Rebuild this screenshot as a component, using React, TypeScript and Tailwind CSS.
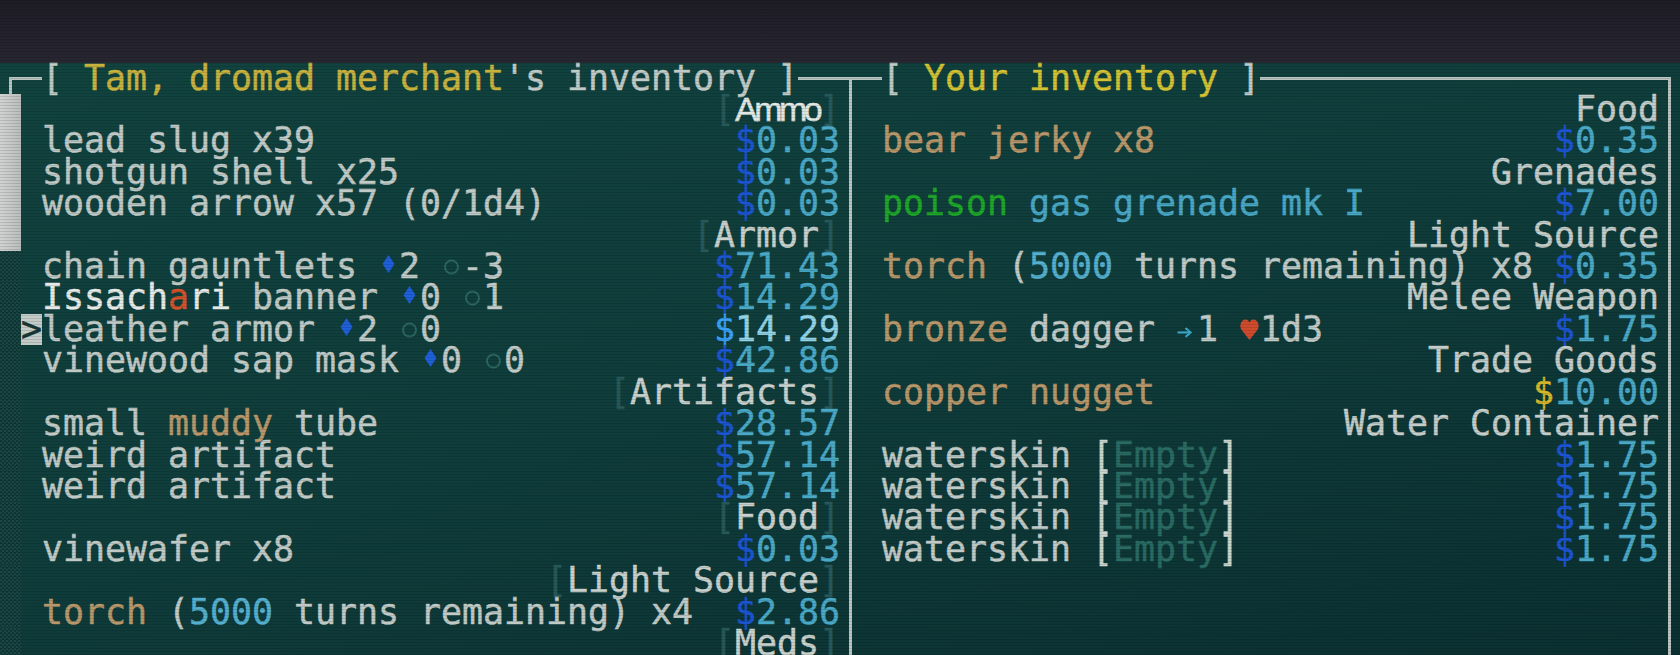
import React from "react";

const LINE = "bg-[#bac5c1]";

function Diamond() {
  return (
    <svg width="21" height="31" viewBox="0 0 21 31" className="inline-block align-top">
      <polygon points="10.5,4 16.5,13 10.5,22 4.5,13" fill="#1f5fd8" />
    </svg>
  );
}

function Ring() {
  return (
    <svg width="21" height="31" viewBox="0 0 21 31" className="inline-block align-top">
      <circle cx="10.5" cy="16" r="6.5" fill="none" stroke="#2c6762" strokeWidth="2" />
    </svg>
  );
}

function Arrow() {
  return (
    <svg width="21" height="31" viewBox="0 0 21 31" className="inline-block align-top">
      <line x1="1.5" y1="18.5" x2="14.5" y2="18.5" stroke="#3aa6c6" strokeWidth="2.2" />
      <polyline points="9.5,14 14.5,18.5 9.5,23" fill="none" stroke="#3aa6c6" strokeWidth="2.2" />
    </svg>
  );
}

function Heart() {
  return (
    <svg width="21" height="31" viewBox="0 0 21 31" className="inline-block align-top">
      <path
        d="M10.5 26 L2.6 16 C0 12.6 1.6 5.5 6.6 5.5 C8.7 5.5 10 7 10.5 8.8 C11 7 12.3 5.5 14.4 5.5 C19.4 5.5 21 12.6 18.4 16 Z"
        fill="#cf4b2d"
      />
    </svg>
  );
}

function Price({ v, sel = false, gold = false }: { v: string; sel?: boolean; gold?: boolean }) {
  return (
    <span>
      <span className={gold ? "text-[#d6b82c]" : sel ? "text-[#3aa2f6]" : "text-[#1c55d2]"}>$</span>
      <span className={sel ? "text-[#92d4e6]" : "text-[#4aa9c6]"}>{v}</span>
    </span>
  );
}

function LCat({ name }: { name: React.ReactNode }) {
  return (
    <span className="ml-auto">
      <span className="text-[#28595a]">[</span>
      <span className="text-[#c8d1cd]">{name}</span>
      <span className="text-[#28595a]">]</span>
    </span>
  );
}

function RCat({ name }: { name: string }) {
  return <span className="ml-auto text-[#c4cdc9]">{name}</span>;
}

function VLine() {
  return (
    <div className="w-[21px] shrink-0 flex justify-center">
      <div className={`w-[3px] h-full ${LINE}`} />
    </div>
  );
}

type RowProps = {
  i: number;
  cursor?: boolean;
  l?: React.ReactNode;
  lp?: React.ReactNode;
  r?: React.ReactNode;
  rp?: React.ReactNode;
};

function Row({ i, cursor, l, lp, r, rp }: RowProps) {
  const gutter =
    i <= 5
      ? "bg-gradient-to-r from-[#d2d3d3] to-[#b9bdbc]"
      : "bg-[repeating-conic-gradient(#1b4845_0%_25%,#0f3735_0%_50%)] bg-[length:4px_4px]";
  return (
    <div className="flex h-[31.43px] leading-[31.43px] whitespace-pre">
      <div className={`w-[21px] shrink-0 ${gutter}`} />
      <div className="w-[21px] shrink-0">
        {cursor && <div className="h-full bg-[#c4ccc8] text-[#163634] text-center">&gt;</div>}
      </div>
      <div className="w-[798px] shrink-0 flex">
        {l}
        {lp && <span className="ml-auto">{lp}</span>}
      </div>
      <VLine />
      <div className="w-[21px] shrink-0" />
      <div className="w-[777px] shrink-0 flex">
        {r}
        {rp && <span className="ml-auto">{rp}</span>}
      </div>
      <VLine />
    </div>
  );
}

function TitleRow() {
  return (
    <div className="flex h-[31.43px] leading-[31.43px] whitespace-pre">
      <div className="w-[21px] shrink-0 pt-[14.5px]">
        <div className="ml-[9px] h-full border-l-[3px] border-t-[3px] border-[#bac5c1]" />
      </div>
      <div className="w-[21px] shrink-0 pt-[14.5px]">
        <div className={`h-[3px] ${LINE}`} />
      </div>
      <div className="w-[756px] shrink-0">
        <span>[ </span>
        <span className="text-[#c8b33f]">Tam, dromad merchant</span>
        <span>'s inventory ]</span>
      </div>
      <div className="w-[42px] shrink-0 pt-[14.5px]">
        <div className={`h-[3px] ${LINE}`} />
      </div>
      <div className="w-[21px] shrink-0 pt-[14.5px] flex flex-col">
        <div className={`h-[3px] shrink-0 ${LINE}`} />
        <div className={`ml-[9px] w-[3px] flex-1 ${LINE}`} />
      </div>
      <div className="w-[21px] shrink-0 pt-[14.5px]">
        <div className={`h-[3px] ${LINE}`} />
      </div>
      <div className="w-[378px] shrink-0">
        <span>[ </span>
        <span className="text-[#d3c233]">Your inventory</span>
        <span> ]</span>
      </div>
      <div className="w-[399px] shrink-0 pt-[14.5px]">
        <div className={`h-[3px] ${LINE}`} />
      </div>
      <div className="w-[21px] shrink-0 pt-[14.5px] flex flex-col">
        <div className={`h-[3px] w-[12px] shrink-0 ${LINE}`} />
        <div className={`ml-[9px] w-[3px] flex-1 ${LINE}`} />
      </div>
    </div>
  );
}

const TAN = "text-[#b8976a]";
const CY = "text-[#55b0cf]";

const Waterskin = (
  <span>
    waterskin <span className="text-[#cdd5d1]">[</span>
    <span className="text-[#2a6b63]">Empty</span>
    <span className="text-[#cdd5d1]">]</span>
  </span>
);

const AmmoName = (
  <span className="inline-block w-[84px] text-center font-['Liberation_Sans',sans-serif] text-[34px] tracking-[-3.5px] text-[#e2e8e5]">
    Ammo
  </span>
);

const rows: RowProps[] = [
  { i: 1, l: <LCat name={AmmoName} />, r: <RCat name="Food" /> },
  { i: 2, l: <span>lead slug x39</span>, lp: <Price v="0.03" />, r: <span className={TAN}>bear jerky x8</span>, rp: <Price v="0.35" /> },
  { i: 3, l: <span>shotgun shell x25</span>, lp: <Price v="0.03" />, r: <RCat name="Grenades" /> },
  {
    i: 4,
    l: <span>wooden arrow x57 (0/1d4)</span>,
    lp: <Price v="0.03" />,
    r: (
      <span>
        <span className="text-[#1ea728]">poison</span>
        <span className="text-[#4aa8c6]"> gas grenade mk I</span>
      </span>
    ),
    rp: <Price v="7.00" />,
  },
  { i: 5, l: <LCat name="Armor" />, r: <RCat name="Light Source" /> },
  {
    i: 6,
    l: (
      <span>
        chain gauntlets <Diamond />2 <Ring />-3
      </span>
    ),
    lp: <Price v="71.43" />,
    r: (
      <span>
        <span className={TAN}>torch</span> (<span className={CY}>5000</span> turns remaining) x8
      </span>
    ),
    rp: <Price v="0.35" />,
  },
  {
    i: 7,
    l: (
      <span>
        <span className="text-[#e6ebe8]">Issach</span>
        <span className="text-[#d4532a]">a</span>
        <span className="text-[#e6ebe8]">ri</span> banner <Diamond />0 <Ring />1
      </span>
    ),
    lp: <Price v="14.29" />,
    r: <RCat name="Melee Weapon" />,
  },
  {
    i: 8,
    cursor: true,
    l: (
      <span>
        leather armor <Diamond />2 <Ring />0
      </span>
    ),
    lp: <Price v="14.29" sel />,
    r: (
      <span>
        <span className={TAN}>bronze</span> dagger <Arrow />1 <Heart />1d3
      </span>
    ),
    rp: <Price v="1.75" />,
  },
  {
    i: 9,
    l: (
      <span>
        vinewood sap mask <Diamond />0 <Ring />0
      </span>
    ),
    lp: <Price v="42.86" />,
    r: <RCat name="Trade Goods" />,
  },
  { i: 10, l: <LCat name="Artifacts" />, r: <span className={TAN}>copper nugget</span>, rp: <Price v="10.00" gold /> },
  {
    i: 11,
    l: (
      <span>
        small <span className={TAN}>muddy</span> tube
      </span>
    ),
    lp: <Price v="28.57" />,
    r: <RCat name="Water Container" />,
  },
  { i: 12, l: <span>weird artifact</span>, lp: <Price v="57.14" />, r: Waterskin, rp: <Price v="1.75" /> },
  { i: 13, l: <span>weird artifact</span>, lp: <Price v="57.14" />, r: Waterskin, rp: <Price v="1.75" /> },
  { i: 14, l: <LCat name="Food" />, r: Waterskin, rp: <Price v="1.75" /> },
  { i: 15, l: <span>vinewafer x8</span>, lp: <Price v="0.03" />, r: Waterskin, rp: <Price v="1.75" /> },
  { i: 16, l: <LCat name="Light Source" /> },
  {
    i: 17,
    l: (
      <span>
        <span className={TAN}>torch</span> (<span className={CY}>5000</span> turns remaining) x4
      </span>
    ),
    lp: <Price v="2.86" />,
  },
  { i: 18, l: <LCat name="Meds" /> },
];

export default function App() {
  return (
    <div className="relative w-[1680px] h-[655px] overflow-hidden font-['DejaVu_Sans_Mono',monospace] text-[34.88px] text-[#c0cac6] [-webkit-text-stroke:0.5px_currentColor]">
      <div className="h-[62.5px] bg-gradient-to-b from-[#1e1d26] to-[#282630]" />
      <div className="h-[592.5px] bg-[linear-gradient(165deg,#11433f_0%,#0f3d3b_50%,#0b3031_100%)]">
        <TitleRow />
        {rows.map((r) => (
          <Row key={r.i} {...r} />
        ))}
      </div>
      <div className="pointer-events-none absolute inset-0 bg-[repeating-linear-gradient(to_bottom,rgba(0,0,0,0.12)_0px,rgba(0,0,0,0.12)_1px,transparent_1px,transparent_3px)]" />
    </div>
  );
}
